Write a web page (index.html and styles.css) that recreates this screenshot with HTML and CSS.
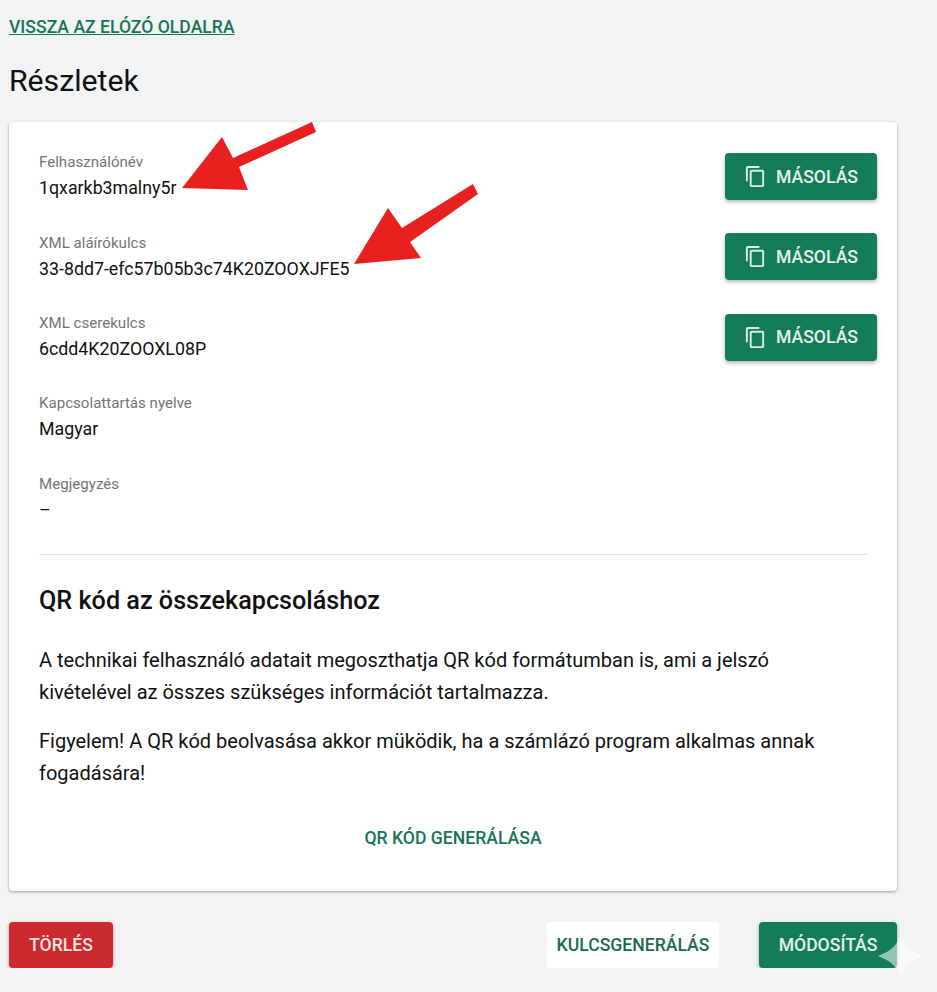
FILE: index.html
```html
<!DOCTYPE html>
<html lang="hu">
<head>
<meta charset="UTF-8">
<title>Részletek</title>
<link rel="stylesheet" href="styles.css">
</head>
<body>
<div class="page">
    <a class="back-link" href="#">VISSZA AZ ELÓZÓ OLDALRA</a>
    <h1>Részletek</h1>

    <div class="card">
        <div class="field">
            <div>
                <div class="field-label">Felhasználónév</div>
                <div class="field-value">1qxarkb3malny5r</div>
            </div>
            <button class="btn btn-green btn-copy">
                <svg viewBox="0 0 24 24"><path d="M16 1H4c-1.1 0-2 .9-2 2v14h2V3h12V1zm3 4H8c-1.1 0-2 .9-2 2v14c0 1.1.9 2 2 2h11c1.1 0 2-.9 2-2V7c0-1.1-.9-2-2-2zm0 16H8V7h11v14z"/></svg>
                MÁSOLÁS
            </button>
        </div>
        <div class="field">
            <div>
                <div class="field-label">XML aláírókulcs</div>
                <div class="field-value">33-8dd7-efc57b05b3c74K20ZOOXJFE5</div>
            </div>
            <button class="btn btn-green btn-copy">
                <svg viewBox="0 0 24 24"><path d="M16 1H4c-1.1 0-2 .9-2 2v14h2V3h12V1zm3 4H8c-1.1 0-2 .9-2 2v14c0 1.1.9 2 2 2h11c1.1 0 2-.9 2-2V7c0-1.1-.9-2-2-2zm0 16H8V7h11v14z"/></svg>
                MÁSOLÁS
            </button>
        </div>
        <div class="field">
            <div>
                <div class="field-label">XML cserekulcs</div>
                <div class="field-value">6cdd4K20ZOOXL08P</div>
            </div>
            <button class="btn btn-green btn-copy">
                <svg viewBox="0 0 24 24"><path d="M16 1H4c-1.1 0-2 .9-2 2v14h2V3h12V1zm3 4H8c-1.1 0-2 .9-2 2v14c0 1.1.9 2 2 2h11c1.1 0 2-.9 2-2V7c0-1.1-.9-2-2-2zm0 16H8V7h11v14z"/></svg>
                MÁSOLÁS
            </button>
        </div>
        <div class="field">
            <div>
                <div class="field-label">Kapcsolattartás nyelve</div>
                <div class="field-value">Magyar</div>
            </div>
        </div>
        <div class="field">
            <div>
                <div class="field-label">Megjegyzés</div>
                <div class="field-value">–</div>
            </div>
        </div>

        <hr class="divider">

        <h2>QR kód az összekapcsoláshoz</h2>
        <p>A technikai felhasználó adatait megoszthatja QR kód formátumban is, ami a jelszó kivételével az összes szükséges információt tartalmazza.</p>
        <p>Figyelem! A QR kód beolvasása akkor müködik, ha a számlázó program alkalmas annak fogadására!</p>
        <div class="qr-action">
            <button class="btn btn-text">QR KÓD GENERÁLÁSA</button>
        </div>
    </div>

    <div class="actions">
        <button class="btn btn-red">TÖRLÉS</button>
        <div class="actions-right">
            <button class="btn btn-white">KULCSGENERÁLÁS</button>
            <button class="btn btn-green btn-edit">MÓDOSÍTÁS</button>
        </div>
    </div>
</div>

<!-- annotation arrows and the watermark lie on top of the page -->
<svg class="overlay" viewBox="0 0 937 992">
    <polygon class="arrow" points="182,188 222,137 233,158 312,122 316,132 239,167 248,190"/>
    <polygon class="arrow" points="354,264 388,208 402,228 473,184 478,194 410,242 421,258"/>
    <path class="spark" d="M901 933 C904 946 910 952 924 956 C910 960 904 966 901 979 C897 966 891 961 878 956 C891 951 897 946 901 933 Z"/>
</svg>
</body>
</html>
```

FILE: styles.css
```css
* {
  box-sizing: border-box;
}

body {
  margin: 0;
  background-color: #f2f3f5;
  color: #111;
  font-family: 'Roboto', 'Liberation Sans', sans-serif;
}

.page {
  width: 888px;
  margin-left: 9px;
  padding-top: 17px;
}

.back-link {
  display: block;
  width: max-content;
  height: 20px;
  font-size: 17.6px;
  font-weight: 500;
  line-height: 20px;
  color: #1a7355;
  text-decoration: underline;
}

h1 {
  margin: 24px 0 0;
  font-size: 30.2px;
  font-weight: 400;
  line-height: 40px;
}

.card {
  margin-top: 21px;
  height: 769px;
  padding: 28.4px 30px 0;
  background-color: #fff;
  border-radius: 4px;
  box-shadow: 0 1px 3px rgba(0, 0, 0, 0.35);
}

.field {
  display: flex;
  justify-content: space-between;
  height: 80.3px;
  margin-right: -10px;
}

.field-label {
  font-size: 15.1px;
  line-height: 24px;
  color: #757575;
}

.field-value {
  font-size: 17.8px;
  line-height: 28px;
  color: #111;
}

.btn {
  border: none;
  border-radius: 4px;
  font-family: inherit;
  font-size: 17.6px;
  font-weight: 500;
  height: 46px;
  padding: 0;
}

.btn-green {
  background-color: #157c59;
  color: #e4f2ec;
  box-shadow: 0 2px 4px rgba(0, 0, 0, 0.3);
}

.btn-copy {
  display: flex;
  align-items: center;
  gap: 9px;
  width: 152px;
  height: 47px;
  margin-top: 2.7px;
  padding-left: 19px;
}

.btn-copy svg {
  width: 23px;
  height: 23px;
  fill: #d8ece4;
}

.btn-edit {
  width: 138px;
}

.btn-red {
  width: 104px;
  background-color: #cc2a2d;
  color: #fde3e3;
  box-shadow: 0 2px 4px rgba(0, 0, 0, 0.3);
}

.btn-white {
  width: 172px;
  background-color: #fff;
  color: #1a6b50;
}

.btn-text {
  background: none;
  color: #1a7355;
  padding: 0 20px;
}

.divider {
  margin: 2.6px 0 0;
  border: none;
  border-top: 1px solid #e0e0e0;
}

h2 {
  margin: 28px 0 0;
  font-size: 25.2px;
  font-weight: 500;
  line-height: 36px;
}

p {
  max-width: 810px;
  margin: 18px 0 0;
  font-size: 20px;
  line-height: 31.5px;
}

p:first-of-type {
  margin-top: 26px;
}

.qr-action {
  display: flex;
  justify-content: center;
  margin-top: 26px;
}

.actions {
  display: flex;
  justify-content: space-between;
  margin-top: 31px;
}

.actions-right {
  display: flex;
  gap: 40px;
}

.overlay {
  position: absolute;
  top: 0;
  left: 0;
  width: 937px;
  height: 992px;
  pointer-events: none;
}

.arrow {
  fill: #e8201f;
}

.spark {
  fill: rgba(255, 255, 255, 0.55);
}
```
